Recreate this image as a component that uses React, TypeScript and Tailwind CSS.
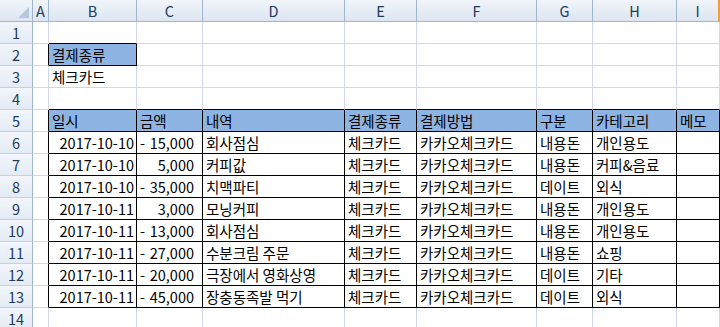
import React from "react";

type Entry = {
  date: string;
  amount: string;
  minus: boolean;
  memo: string;
  payType: string;
  payMethod: string;
  group: string;
  category: string;
};

const ENTRIES: Entry[] = [
  { date: "2017-10-10", amount: "15,000", minus: true, memo: "회사점심", payType: "체크카드", payMethod: "카카오체크카드", group: "내용돈", category: "개인용도" },
  { date: "2017-10-10", amount: "5,000", minus: false, memo: "커피값", payType: "체크카드", payMethod: "카카오체크카드", group: "내용돈", category: "커피&음료" },
  { date: "2017-10-10", amount: "35,000", minus: true, memo: "치맥파티", payType: "체크카드", payMethod: "카카오체크카드", group: "데이트", category: "외식" },
  { date: "2017-10-11", amount: "3,000", minus: false, memo: "모닝커피", payType: "체크카드", payMethod: "카카오체크카드", group: "내용돈", category: "개인용도" },
  { date: "2017-10-11", amount: "13,000", minus: true, memo: "회사점심", payType: "체크카드", payMethod: "카카오체크카드", group: "내용돈", category: "개인용도" },
  { date: "2017-10-11", amount: "27,000", minus: true, memo: "수분크림 주문", payType: "체크카드", payMethod: "카카오체크카드", group: "내용돈", category: "쇼핑" },
  { date: "2017-10-11", amount: "20,000", minus: true, memo: "극장에서 영화상영", payType: "체크카드", payMethod: "카카오체크카드", group: "데이트", category: "기타" },
  { date: "2017-10-11", amount: "45,000", minus: true, memo: "장충동족발 먹기", payType: "체크카드", payMethod: "카카오체크카드", group: "데이트", category: "외식" },
];

const COLS = ["A", "B", "C", "D", "E", "F", "G", "H", "I"];
const HEADINGS = ["일시", "금액", "내역", "결제종류", "결제방법", "구분", "카테고리", "메모"];
const ROW_COUNT = 14;

// black-bordered areas: B2, and the ledger B5:I13 (1-based rows, cols B=1..I=8)
function boxed(row: number, col: number) {
  if (row === 2 && col === 1) return true;
  return row >= 5 && row <= 13 && col >= 1 && col <= 8;
}

function filled(row: number, col: number) {
  return (row === 2 && col === 1) || (row === 5 && col >= 1);
}

function Cell({ row, col, children, className = "" }: { row: number; col: number; children?: React.ReactNode; className?: string }) {
  const right = boxed(row, col) || boxed(row, col + 1) ? "border-r-black" : "border-r-[#d0d7e5]";
  const bottom = boxed(row, col) || boxed(row + 1, col) ? "border-b-black" : "border-b-[#d0d7e5]";
  const bg = filled(row, col) ? "bg-[#8db4e2]" : "bg-white";
  return (
    <div className={`h-[22px] overflow-visible whitespace-nowrap border-r border-b ${right} ${bottom} ${bg} text-[14.5px] leading-[21px] text-black ${className}`}>
      {children}
    </div>
  );
}

function cellContent(row: number, col: number): React.ReactNode {
  if (row === 2 && col === 1) return <span className="pl-[3px]">결제종류</span>;
  if (row === 3 && col === 1) return <span className="pl-[3px]">체크카드</span>;
  if (row === 5 && col >= 1) return <span className="pl-[3px]">{HEADINGS[col - 1]}</span>;
  if (row >= 6 && row <= 13) {
    const e = ENTRIES[row - 6];
    switch (col) {
      case 1:
        return <div className="pr-[2px] text-right">{e.date}</div>;
      case 2:
        return (
          <div className="flex justify-between pl-[3px] pr-[8px]">
            <span>{e.minus ? "-" : ""}</span>
            <span>{e.amount}</span>
          </div>
        );
      case 3:
        return <span className="pl-[3px]">{e.memo}</span>;
      case 4:
        return <span className="pl-[3px]">{e.payType}</span>;
      case 5:
        return <span className="pl-[3px]">{e.payMethod}</span>;
      case 6:
        return <span className="pl-[3px]">{e.group}</span>;
      case 7:
        return <span className="pl-[3px]">{e.category}</span>;
    }
  }
  return null;
}

export default function App() {
  const rows = Array.from({ length: ROW_COUNT }, (_, i) => i + 1);

  return (
    <div
      className="h-[327px] w-[720px] overflow-hidden bg-white"
      style={{ fontFamily: '"Noto Sans CJK KR", "Noto Sans", sans-serif' }}
    >
      <div className="grid grid-cols-[33px_16px_88px_66px_142px_72px_120px_56px_84px_43px]">
        {/* corner */}
        <div className="relative h-[22px] border-r border-b border-r-[#9eb6ce] border-b-[#9eb6ce] bg-gradient-to-b from-[#f1f5fa] to-[#dde5f0]">
          <div className="absolute right-[3px] bottom-[3px] h-0 w-0 border-b-[11px] border-l-[11px] border-b-[#b6c7dc] border-l-transparent" />
        </div>
        {COLS.map((c, i) => (
          <div
            key={c}
            className={`flex h-[22px] items-center justify-center border-b border-b-[#9eb6ce] bg-gradient-to-b from-[#f1f5fa] to-[#dde5f0] text-[14.5px] text-[#1b3a5c] ${
              i === COLS.length - 1 ? "border-r-2 border-r-[#f29d38]" : "border-r border-r-[#9eb6ce]"
            }`}
          >
            {c}
          </div>
        ))}

        {rows.map((r) => (
          <React.Fragment key={r}>
            <div className="flex h-[22px] items-center justify-center border-r border-b border-r-[#9eb6ce] border-b-[#c5d1e0] bg-gradient-to-b from-[#f3f6fb] to-[#e4ebf5] text-[14.5px] text-[#1b3a5c]">
              {r}
            </div>
            {COLS.map((_, ci) => (
              <Cell key={ci} row={r} col={ci}>
                {cellContent(r, ci)}
              </Cell>
            ))}
          </React.Fragment>
        ))}
      </div>
    </div>
  );
}
